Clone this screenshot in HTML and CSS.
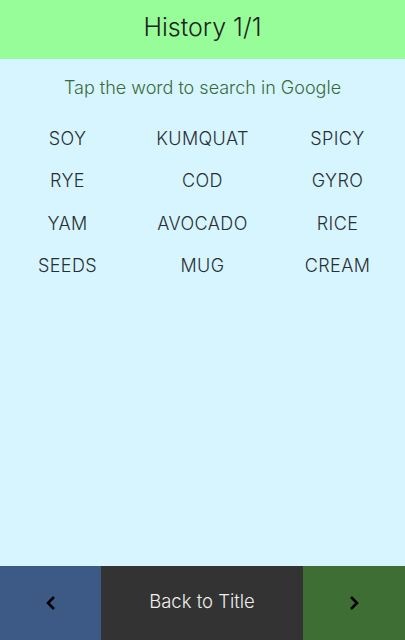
FILE: index.html
```html
<!DOCTYPE HTML>
<html lang="en" dir="ltr">
<head>
    <meta charset="utf-8"/>
    <title>History</title>
<link rel="stylesheet" href="styles.css">
</head>
<body>
    <div class="screen">
        <header class="title-bar">
            <h1>History 1/1</h1>
        </header>

        <main class="history">
            <p class="hint">Tap the word to search in Google</p>
            <ul class="words">
                <li><a href="#">SOY</a></li>
                <li><a href="#">KUMQUAT</a></li>
                <li><a href="#">SPICY</a></li>
                <li><a href="#">RYE</a></li>
                <li><a href="#">COD</a></li>
                <li><a href="#">GYRO</a></li>
                <li><a href="#">YAM</a></li>
                <li><a href="#">AVOCADO</a></li>
                <li><a href="#">RICE</a></li>
                <li><a href="#">SEEDS</a></li>
                <li><a href="#">MUG</a></li>
                <li><a href="#">CREAM</a></li>
            </ul>
        </main>

        <!-- paging + back button -->
        <nav class="pager">
            <button class="pager-prev" aria-label="previous page">
                <svg width="12" height="16" viewBox="0 0 12 16"><path d="M9 2 L3 8 L9 14" fill="none" stroke="#000" stroke-width="2.6"/></svg>
            </button>
            <button class="pager-back"><span>Back to Title</span></button>
            <button class="pager-next" aria-label="next page">
                <svg width="12" height="16" viewBox="0 0 12 16"><path d="M3 2 L9 8 L3 14" fill="none" stroke="#000" stroke-width="2.6"/></svg>
            </button>
        </nav>
    </div>
</body>
</html>
```

FILE: styles.css
```css
html, body {
    margin: 0;
    padding: 0;
}

body {
    font-family: Inter, "Liberation Sans", sans-serif;
    font-weight: 300;
    background: #d6f5fe;
}

.screen {
    display: flex;
    flex-direction: column;
    height: 640px;
}

.title-bar {
    background: #96fd98;
    height: 59px;
    box-sizing: border-box;
    padding-bottom: 5px;
    display: flex;
    align-items: center;
    justify-content: center;
}
.title-bar h1 {
    margin: 0;
    font-size: 25px;
    font-weight: 300;
    color: #222;
}

.history {
    flex: 1;
    padding-top: 18px;
}

.hint {
    margin: 0;
    text-align: center;
    font-size: 18px;
    line-height: 22px;
    color: #3b6b3a;
}

.words {
    list-style: none;
    margin: 0;
    padding: 29px 0 0;
    display: grid;
    grid-template-columns: repeat(3, 1fr);
    row-gap: 21.3px;
}
.words li {
    text-align: center;
    line-height: 21px;
}
.words a {
    display: block;
    color: #2a2f33;
    text-decoration: none;
    font-size: 18px;
    line-height: 21px;
    letter-spacing: 0.4px;
}

.pager {
    display: flex;
    height: 74px;
}
.pager button {
    border: 0;
    margin: 0;
    padding: 0;
    font-family: inherit;
    font-weight: 300;
    display: flex;
    align-items: center;
    justify-content: center;
}
.pager-prev {
    width: 101px;
    background: #3d5a86;
}
.pager-back {
    flex: 1;
    background: #333333;
    color: #eeeeee;
    font-size: 18.5px;
}
.pager-back span {
    margin-bottom: 4px;
}
.pager-next {
    width: 102px;
    background: #3e6e33;
}
```
